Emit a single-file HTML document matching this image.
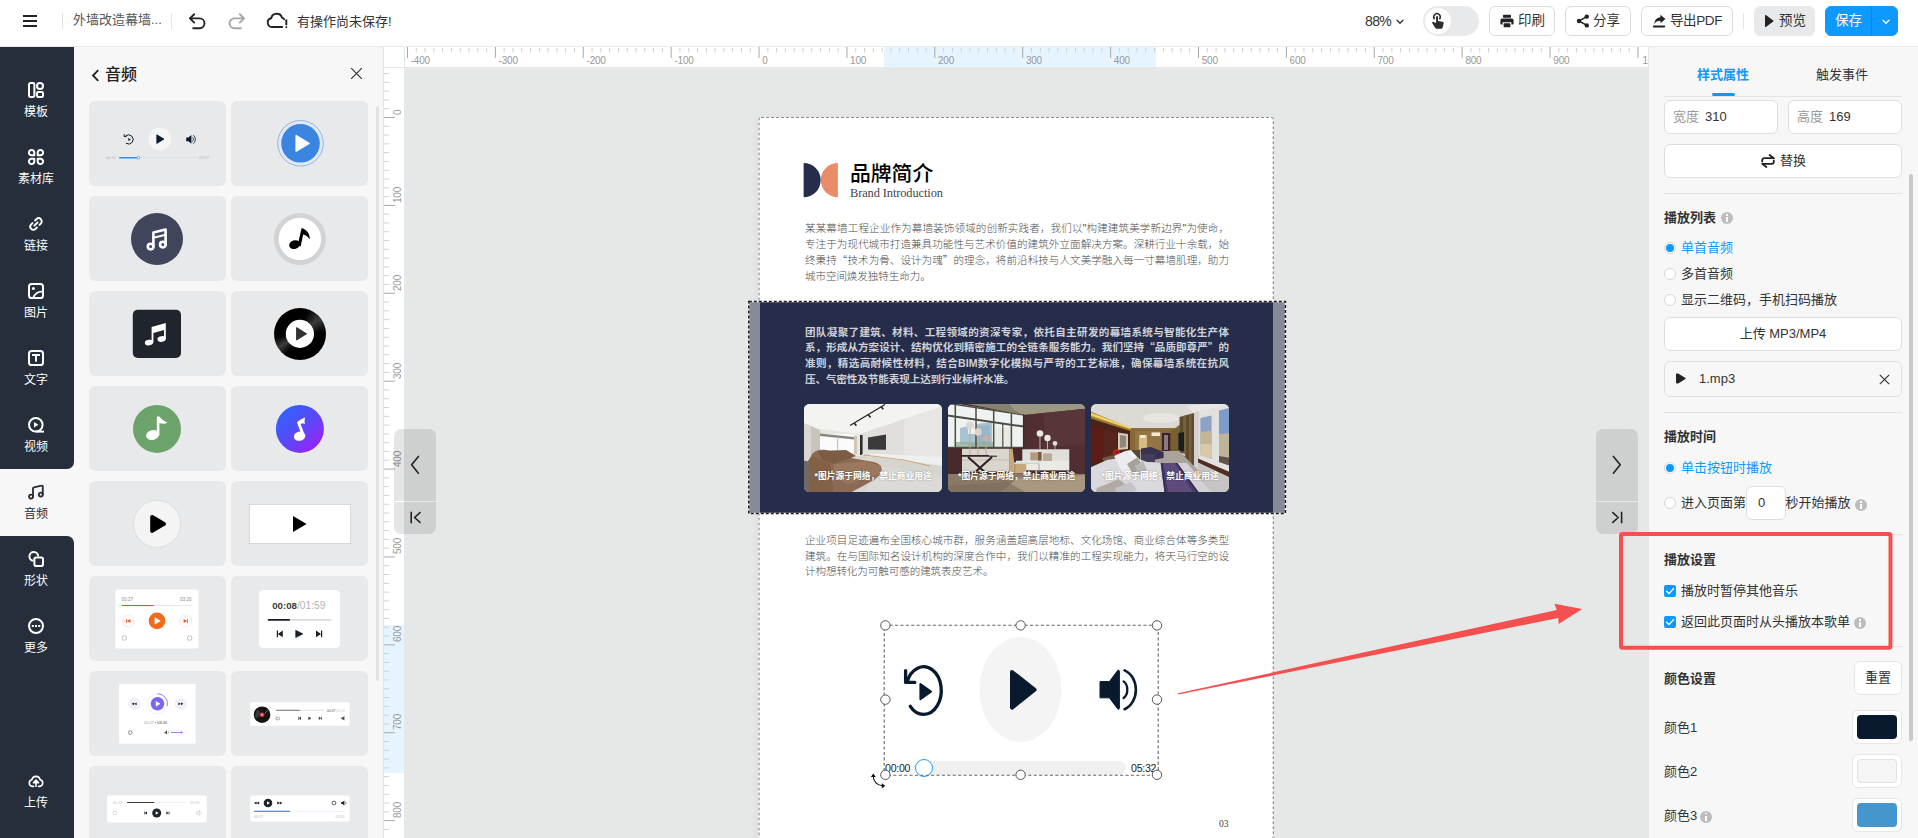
<!DOCTYPE html>
<html lang="zh-CN">
<head>
<meta charset="utf-8">
<title>编辑器</title>
<style>
*{box-sizing:border-box;margin:0;padding:0}
html,body{width:1918px;height:838px;overflow:hidden;background:#e6e8e8}
body{position:relative;font-family:"Liberation Sans","Noto Sans CJK SC",sans-serif;font-size:13px;color:#333;-webkit-font-smoothing:antialiased}
.abs{position:absolute}
svg{display:block;overflow:visible}
/* ---------- top bar ---------- */
#top{position:absolute;left:0;top:0;width:1918px;height:47px;background:#fff;border-bottom:1px solid #e9e9e9;z-index:20}
#top .t{position:absolute;white-space:nowrap;line-height:20px;height:20px}
.vdiv{position:absolute;width:1px;background:#e4e4e4}
.btn{position:absolute;top:6px;height:30px;border:1px solid #d9dbde;border-radius:6px;background:#fff;font-size:13.5px;color:#333;white-space:nowrap}
.btn span{position:absolute;top:4px;line-height:20px}
/* ---------- sidebar ---------- */
#side{position:absolute;left:0;top:47px;width:74px;height:791px;background:#f7f7f7;z-index:5}
#side .dk{position:absolute;left:0;width:74px;background:#252e3a}
.si{position:absolute;left:0;width:74px;height:67px;color:#fff;text-align:center;font-size:12px}
.si svg{position:absolute;left:28px;top:15px;width:16px;height:16px}
.si b{position:absolute;left:-1px;width:74px;top:36px;font-weight:400;line-height:18px}
.si.on{color:#242d39}
/* ---------- audio panel ---------- */
#pan{position:absolute;left:74px;top:47px;width:309px;height:791px;background:#f7f7f7;overflow:hidden}
.card{position:absolute;width:137px;height:85px;background:#e8e9eb;border-radius:6px;overflow:hidden}
/* ---------- rulers ---------- */
#rh{position:absolute;left:404px;top:47px;width:1244px;height:20px;background:#fff;overflow:hidden;z-index:3}
#rv{position:absolute;left:384px;top:67px;width:20px;height:771px;background:#fff;box-shadow:-1px 0 0 #e3e5e8;overflow:hidden;z-index:3}
#rc{position:absolute;left:383px;top:47px;width:22px;height:21px;background:#fff;border-left:1px solid #e3e5e8;border-right:1px solid #e3e5e8;border-bottom:1px solid #e3e5e8;z-index:4}
.rl{position:absolute;font-size:10px;line-height:10px;color:#999;white-space:nowrap;letter-spacing:-.2px}
/* ---------- right panel ---------- */
#rp{position:absolute;left:1648px;top:47px;width:270px;height:791px;background:#f7f7f7;border-left:1px solid #e6e6e6;z-index:6}
#rp .t{position:absolute;white-space:nowrap;line-height:18px;height:18px;font-size:13px;color:#333}
#rp .h{font-weight:700;color:#333}
#rp .hr{position:absolute;left:15px;width:238px;height:1px;background:#e3e3e3}
.box{position:absolute;background:#fff;border:1px solid #dcdee0;border-radius:6px}
.rad{position:absolute;width:12px;height:12px;border-radius:50%;border:1px solid #d6d6d6;background:#fff}
.rad.on:after{content:"";position:absolute;left:1px;top:1px;width:8px;height:8px;border-radius:50%;background:#0d99ff}
.chk{position:absolute;width:12px;height:12px;border-radius:2px;background:#0d99ff}
.inf{position:absolute;width:12px;height:12px;border-radius:50%;background:#bdbdbd}
.inf:before{content:"";position:absolute;left:4.9px;top:2.2px;width:2.2px;height:1.8px;background:#fff}
.inf:after{content:"";position:absolute;left:4.9px;top:5.3px;width:2.2px;height:4.9px;background:#fff}

/* ---------- page content ---------- */
.para{width:424px;font-size:10.56px;line-height:15.82px;white-space:nowrap}
.para div{height:15.82px;text-align:justify;text-align-last:justify;overflow:visible}
.para div.last{text-align-last:left;text-align:left;letter-spacing:-.08px}
.ph{top:404px;width:137.6px;height:87.8px;border-radius:5.5px;overflow:hidden;background:#ccc}
.q{font-style:normal;font-family:"Noto Sans CJK SC",sans-serif;line-height:0}
.ph b{position:absolute;left:0;right:0;top:65px;text-align:center;font-size:8.75px;line-height:14px;font-weight:700;color:#fff;white-space:nowrap;text-shadow:0 0 2px rgba(0,0,0,.35)}
</style>
</head>
<body>

<!-- ================= CANVAS (stage) ================= -->
<div id="stage" class="abs" style="left:404px;top:67px;width:1244px;height:771px;background:#e6e8e8;overflow:hidden">
<div class="abs" style="left:-404px;top:-67px;width:1918px;height:838px">
  <!-- page -->
  <div class="abs" style="left:758px;top:117px;width:516px;height:740px;background:#fff;border-radius:2px;box-shadow:-3px 0 6px rgba(0,0,0,.03)"></div>
  <svg class="abs" style="left:0;top:0" width="1918" height="838" viewBox="0 0 1918 838"><rect x="759" y="117.5" width="514.3" height="760" rx="2" fill="none" stroke="#8c8c8c" stroke-width="1.2" stroke-dasharray="3 2"/></svg>

  <!-- header logo -->
  <svg class="abs" style="left:803px;top:162px" width="36" height="36" viewBox="0 0 36 36"><path d="M.6 1 A17.1 17.1 0 0 1 .6 35.2 Z" fill="#252d4a"/><path d="M34.9 1 A17.1 17.1 0 0 0 34.9 35.2 Z" fill="#eb8c68"/></svg>
  <div class="abs pt" style="left:850px;top:159px;font-size:20.8px;line-height:30px;font-weight:500;color:#000;white-space:nowrap">品牌简介</div>
  <div class="abs" style="left:850px;top:185px;font-family:'Liberation Serif','DejaVu Serif',serif;font-size:12.4px;line-height:16px;color:#444;white-space:nowrap;letter-spacing:-.1px">Brand Introduction</div>

  <!-- paragraph 1 -->
  <div class="abs para" style="left:805px;top:221.4px;color:#4d4d4d;font-weight:300">
    <div>某某幕墙工程企业作为幕墙装饰领域的创新实践者，我们以"构建建筑美学新边界"为使命，</div>
    <div>专注于为现代城市打造兼具功能性与艺术价值的建筑外立面解决方案。深耕行业十余载，始</div>
    <div>终秉持<i class="q">“</i>技术为骨、设计为魂<i class="q">”</i>的理念，将前沿科技与人文美学融入每一寸幕墙肌理，助力</div>
    <div class="last">城市空间焕发独特生命力。</div>
  </div>

  <!-- dark band -->
  <div class="abs" style="left:749px;top:302px;width:536px;height:211px;background:#868a99"></div>
  <div class="abs" style="left:759.5px;top:302px;width:513.5px;height:211px;background:#252d4a"></div>
  <svg class="abs" style="left:0;top:0" width="1918" height="838" viewBox="0 0 1918 838"><rect x="748.8" y="301.6" width="536.6" height="211.8" fill="none" stroke="#fff" stroke-opacity=".75" stroke-width="1.5"/><rect x="748.8" y="301.6" width="536.6" height="211.8" fill="none" stroke="#1a1a1a" stroke-width="1.5" stroke-dasharray="3 2"/></svg>
  <div class="abs para" style="left:805px;top:324.6px;color:#cfd1d9;font-weight:700">
    <div>团队凝聚了建筑、材料、工程领域的资深专家，依托自主研发的幕墙系统与智能化生产体</div>
    <div>系，形成从方案设计、结构优化到精密施工的全链条服务能力。我们坚持<i class="q">“</i>品质即尊严<i class="q">”</i>的</div>
    <div>准则，精选高耐候性材料，结合BIM数字化模拟与严苛的工艺标准，确保幕墙系统在抗风</div>
    <div class="last">压、气密性及节能表现上达到行业标杆水准。</div>
  </div>

  <!-- photos -->
  <div id="ph1" class="abs ph" style="left:804.4px"><svg class="abs" style="left:0;top:0" width="137.6" height="87.8" viewBox="0 0 137.6 87.8" preserveAspectRatio="none"><defs><filter id="bl" x="-5%" y="-5%" width="110%" height="110%"><feGaussianBlur stdDeviation=".7"/></filter></defs><g filter="url(#bl)">
<rect x="-2" y="-2" width="142" height="92" fill="#e6e6e3"/>
<path d="M-2 -2 H140 V2 L56 30 L10 24 L-2 20 Z" fill="#f3f3f0"/>
<path d="M56 30 L140 2 V62 L56 48 Z" fill="#e0dfdc"/>
<path d="M100 16 L140 2 V62 L100 55 Z" fill="#e7e6e3"/>
<path d="M-2 18 L7 22 V60 H-2 Z" fill="#d8d6d2"/>
<path d="M7 22 L16 26 V52 L7 56 Z" fill="#c9c4bb"/>
<rect x="16" y="30" width="34" height="19" fill="#fbfbfb"/>
<path d="M16 29.5 L50 33 V35.4 L16 32 Z" fill="#8a8781"/>
<rect x="33" y="33" width="1.2" height="16" fill="#c6c4bf"/>
<rect x="50" y="32" width="3" height="18" fill="#cfc6b8"/>
<rect x="56" y="31" width="2.6" height="20" fill="#2e2e2e"/>
<path d="M64 33.4 L82 30.4 V45.8 L64 45.4 Z" fill="#3b3b3d"/>
<path d="M46 21.5 L81 0.5" stroke="#262626" stroke-width="1.3" fill="none"/>
<path d="M50 19 l2.4 2.6 M64 10.4 l2.6 3 M77 2.6 l2.4 2.6" stroke="#262626" stroke-width="1.6" fill="none"/>
<path d="M58 50 L140 58 V90 H40 Z" fill="#d6d4cf"/>
<path d="M66 49.6 L140 53 V62 L96 56 L66 52.4 Z" fill="#efefed"/>
<path d="M60 51 L100 56 L126 62" stroke="#c79a62" stroke-width="1" fill="none" opacity=".8"/>
<path d="M70 62 L140 72 V90 H60 Z" fill="#dcdad6"/>
<path d="M46 52 H66 L70 58 H50 Z" fill="#dcd8cd"/>
<path d="M8 50 C12 45 20 45 26 47 L44 47 L47 54 L70 58 C78 60 79 66 77 70 L70 76 L44 90 H4 L3 60 Z" fill="#8d6a52"/>
<path d="M14 47 L42 46 L52 52 L30 60 L18 56 Z" fill="#7c5b45"/>
<path d="M30 60 L62 57 L77 62 L77 70 L44 80 L30 74 Z" fill="#9a775d"/>
<path d="M3 58 L9 52 L26 60 L30 90 H3 Z" fill="#84614a"/>
<path d="M-2 56 L6 58 V90 H-2 Z" fill="#6f6a66"/>
</g></svg><b>*图片源于网络，禁止商业用途</b></div>
<div id="ph2" class="abs ph" style="left:947.9px"><svg class="abs" style="left:0;top:0" width="137.6" height="87.8" viewBox="0 0 137.6 87.8" preserveAspectRatio="none"><defs><filter id="bl" x="-5%" y="-5%" width="110%" height="110%"><feGaussianBlur stdDeviation=".7"/></filter></defs><g filter="url(#bl)">
<rect x="-2" y="-2" width="142" height="92" fill="#4f2f31"/>
<path d="M-2 -2 L76 11 V44 H-2 Z" fill="#eef3f1"/>
<path d="M12 24 L20 22 V40 H12 Z M28 20 L44 18 V42 H28 Z M20 30 H28 V42 H20 Z" fill="#a9c3d3"/><path d="M30 22 L42 21 V40 H30 Z" fill="#8fb0c9" opacity=".7"/>
<path d="M7 38 H56 V43.6 H7 Z" fill="#8fae98" opacity=".75"/>
<path d="M46 24 H64 V43 H46 Z" fill="#e7ebe6"/>
<g stroke="#4f4c41" fill="none"><path d="M-2 11.2 L76 22.6" stroke-width="2"/><path d="M-2 -1 L76 11" stroke-width="1.4"/><path d="M7.3 1 V44 M28 4 V44 M45.7 7 V44 M63.4 9.6 V44" stroke-width="1.5"/><path d="M54.8 20 V44" stroke-width="1.2"/><path d="M-2 43.4 H76" stroke-width="1.4"/></g>
<path d="M9 -2 H140 V4.6 L76 11 Z" fill="#85826e"/><path d="M60 -2 H140 V4.6 L76 11 L66 6 Z" fill="#a5a18b" opacity=".7"/>
<path d="M76 11 L140 4.6 V72 H76 Z" fill="#512f32"/><path d="M96 9 L140 4.6 V40 L96 44 Z" fill="#5c383a" opacity=".7"/>
<path d="M75.6 10 V46" stroke="#3c2a2a" stroke-width="1.4"/>
<path d="M-2 44 H76 V72 H-2 Z" fill="#4a2b2c"/>
<path d="M-2 70 H140 V90 H-2 Z" fill="#8a7965"/><path d="M70 74 L140 71 V90 H50 Z" fill="#b3a28a" opacity=".75"/><path d="M-2 82 L60 78 L80 90 H-2 Z" fill="#7a6b5a" opacity=".6"/>
<path d="M74.3 45.3 H121.3 V57 H74.3 Z" fill="#dfe0db"/><path d="M68 56.7 H121.3 V66.4 H68 Z" fill="#e9e9e5"/><path d="M70 66.4 H120 V68.4 H70 Z" fill="#3a2a2a" opacity=".6"/>
<path d="M82.3 48.4 h10 v8 h-10 z" fill="#b39a7f"/><path d="M90 48 h3.6 v8.6 h-3.6 z" fill="#7d5a40"/><path d="M95 49.4 h9 v7.6 h-9 z" fill="#b9ab95"/>
<path d="M14 44.7 H61.7 V67.6 H14 Z" fill="#d9d7cd"/><path d="M14 55 H61.7 V57 H14 Z" fill="#c6c3b8" opacity=".7"/>
<path d="M61.7 44.7 H64.6 L66.4 60 H78.3 V69.4 H61.7 Z" fill="#c8a77c"/>
<path d="M66 58.4 H92 V60 H66 Z" fill="#cfd6d6"/><path d="M91 60 V68 M67 60 V72" stroke="#8a8a86" stroke-width=".7"/>
<path d="M12.4 51 H49 V52.8 H12.4 Z" fill="#36212a"/><path d="M41 49.6 h9 v2 h-9 z" fill="#e3e0d6"/><path d="M20 53 L40 71 M44 53 L24 71" stroke="#2c1d24" stroke-width="2"/>
<g stroke-width="1" fill="none"><path d="M22 25 V51 M30 31 V51 M38 37 V51" stroke="#b9a99a"/><path d="M92 33 V45 M99.5 37 V45 M107 41.6 V45" stroke="#bcb6a8"/></g>
<circle cx="22" cy="21.5" r="4" fill="#ddd6d2"/><circle cx="30" cy="28" r="3.7" fill="#e2d2cb"/><circle cx="38" cy="34.4" r="2.8" fill="#d9ab9b"/>
<circle cx="92" cy="29.5" r="3.3" fill="#e9e9e1"/><circle cx="99.5" cy="34" r="3.2" fill="#e9e9e1"/><circle cx="107" cy="39.4" r="2.3" fill="#e4e2d8"/>
</g></svg><b>*图片源于网络，禁止商业用途</b></div>
<div id="ph3" class="abs ph" style="left:1091.4px"><svg class="abs" style="left:0;top:0" width="137.6" height="87.8" viewBox="0 0 137.6 87.8" preserveAspectRatio="none"><defs><filter id="bl" x="-5%" y="-5%" width="110%" height="110%"><feGaussianBlur stdDeviation=".7"/></filter></defs><g filter="url(#bl)">
<rect x="-2" y="-2" width="142" height="92" fill="#8a7040"/>
<path d="M-2 -2 H140 V4 L104 10 L84 24 H40 L-2 7 Z" fill="#dcdad5"/>
<ellipse cx="70" cy="14" rx="18" ry="5" fill="#e6e5e2"/>
<path d="M96 2 L140 -2 V6 L104 11 Z" fill="#e9e8e6"/>
<path d="M-2 8 L40 23.4 V25.6 L-2 12 Z" fill="#f2d465"/><path d="M-2 11 L40 25.4 V27.4 L-2 15.4 Z" fill="#9c7a2c" opacity=".8"/>
<path d="M-2 14 L39 27 V56 L-2 64 Z" fill="#4b2118"/>
<path d="M-2 22 L13 25 V56 L-2 60 Z" fill="#5e1c17"/><path d="M13 25 L26 28 V52 L13 56 Z" fill="#56251a"/>
<path d="M27 28.4 L37 30 V45 L27 46 Z" fill="#cfc8ba"/><path d="M29 31 L35 32 V43 L29 44 Z" fill="#8f8878"/>
<path d="M39 25.6 H84 V48 H39 Z" fill="#86693a"/><path d="M44 27 H70 V47 H44 Z" fill="#9a7c48" opacity=".7"/>
<rect x="60.5" y="28.4" width="8.6" height="3.6" fill="#f3ead6"/><path d="M48 31 H56 V46 H48 Z" fill="#e0c78e" opacity=".85"/><rect x="49.4" y="31" width="5" height="3" fill="#f6ecd2"/>
<path d="M71 29 H79.4 V47 H71 Z" fill="#3b2227"/><path d="M73 31 H77 V46 H73 Z" fill="#8a7a86"/>
<path d="M80 26 L88 24 V50 L80 47 Z" fill="#74602f"/>
<path d="M88.6 13 L103 9 V68 L88.6 60 Z" fill="#5c4b2d"/><path d="M92 12 L95 11.2 V63 L92 61.6 Z M98 10.4 L100.4 9.8 V66 L98 64.8 Z" fill="#7b683e" opacity=".8"/>
<path d="M87.4 29 L93 28 V47.5 L87.4 46 Z" fill="#1f1c20"/><path d="M84 47 L94 50 V52 L84 49 Z" fill="#d8d2cc"/>
<path d="M103 8 L108 7 V70 L103 67 Z" fill="#d5d3d1"/>
<path d="M108 7 L140 0 V72 L108 58 Z" fill="#e3e1df"/>
<path d="M109.4 14 L120.6 11.4 V55 L109.4 51 Z" fill="#8ea2c5"/><path d="M109.4 28 L120.6 26.6 V55 L109.4 51 Z" fill="#cdb98d" opacity=".85"/><path d="M109.4 40 L120.6 40 V55 L109.4 51 Z" fill="#e2d2b0" opacity=".7"/>
<path d="M128 6.6 L140 3.6 V62 L128 58 Z" fill="#7e9bcc"/><path d="M128 30 L140 29 V62 L128 58 Z" fill="#c9b88f" opacity=".85"/><path d="M128 52 L140 54 V62 L128 58 Z" fill="#4a3a34" opacity=".8"/>
<path d="M107 54.4 L140 68.6 V74 L107 58.4 Z" fill="#4f2d25"/>
<path d="M107 58.4 L140 74 V90 H118 L107 72 Z" fill="#c7c5c3"/>
<path d="M40 47 H88 L107 66 L118 90 H60 L50 60 Z" fill="#aaa39b"/>
<path d="M50 44.6 L60 43 L72.6 48 V54 L64 55.4 V58 H50 Z" fill="#37314d"/><path d="M50 50 H64 V58 H50 Z" fill="#443c5c"/>
<path d="M40 46 H49 V55 H40 Z" fill="#5a4634"/>
<circle cx="25.4" cy="48.6" r="3.4" fill="#be2220"/><circle cx="25.8" cy="48.4" r="1.4" fill="#7d1a18"/>
<path d="M11 54 L22 51 L26 56 L14 60 Z" fill="#6e5a48"/>
<path d="M-2 64 L16 56 L40 52 L56 58 L70 59 L76 90 H-2 Z" fill="#d9d9de"/>
<path d="M86 59 L96 59 L122 90 H106 Z" fill="#d2d1d5"/>
<path d="M23 52 L34 47 L44 55 L47 64 L32 70 Z" fill="#ecebee"/><path d="M34 47 L40 46 L48 55 L44 56 Z" fill="#f4f3f5"/>
<path d="M36 60 L46 53.6 L52 62 L42 70 Z" fill="#a7a197"/><path d="M44 62 L52 57 L56 66 L48 72 Z" fill="#b9b6b6"/>
<path d="M6 84 L28 75 L36 82 L20 90 H4 Z" fill="#b0aba4"/><path d="M24 84 L40 78 L46 86 L38 90 H26 Z" fill="#c4c2c6"/>
<path d="M69.7 59 H86.3 L109 90 H73.7 Z" fill="#4a3b69"/><path d="M72.6 59 H83.4 L103 90 H77.4 Z" fill="#6a5788" opacity=".6"/><path d="M69.7 59 H71 L75.4 90 H73.7 Z M85 59 H86.3 L109 90 H107 Z" fill="#2e2548" opacity=".8"/>
</g></svg><b>*图片源于网络，禁止商业用途</b></div>

  <!-- paragraph 3 -->
  <div class="abs para" style="left:805px;top:532.8px;color:#4d4d4d;font-weight:300">
    <div>企业项目足迹遍布全国核心城市群，服务涵盖超高层地标、文化场馆、商业综合体等多类型</div>
    <div>建筑。在与国际知名设计机构的深度合作中，我们以精准的工程实现能力，将天马行空的设</div>
    <div class="last">计构想转化为可触可感的建筑表皮艺术。</div>
  </div>
  <div class="abs" style="left:1219px;top:817px;font-family:'Liberation Serif',serif;font-size:9.6px;line-height:14px;color:#444">03</div>

  <!-- player -->
  <div id="player">
  <!-- progress track / labels -->
  <div class="abs" style="left:922px;top:761px;width:204px;height:14px;border-radius:0 7px 7px 0;background:#f0f0f0"></div>
  <div class="abs" style="left:915px;top:759px;width:18px;height:18px;border-radius:50%;background:#fff;border:1px solid #1e9fff"></div>
  <div class="abs" style="left:885px;top:761px;font-size:10.6px;line-height:14px;color:#222;letter-spacing:-.25px;white-space:nowrap">00:00</div>
  <div class="abs" style="left:1131px;top:761px;font-size:10.6px;line-height:14px;color:#222;letter-spacing:-.25px;white-space:nowrap">05:32</div>
  <svg class="abs" style="left:0;top:0" width="1918" height="838" viewBox="0 0 1918 838">
    <ellipse cx="1020.4" cy="689.5" rx="41" ry="52.5" fill="#f4f4f4"/>
    <path d="M1012 672 L1034.6 689.8 L1012 707.6 Z" fill="#0a1a2e" stroke="#0a1a2e" stroke-width="4" stroke-linejoin="round"/>
    <!-- replay -->
    <g fill="none" stroke="#0a1a2e" stroke-width="3.3" stroke-linecap="round" stroke-linejoin="round">
      <path d="M907 682.2 A17.7 23.8 0 1 1 910.3 706.3"/>
      <path d="M905.6 670.6 V682.4 H914.8"/>
    </g>
    <path d="M920.4 684 L931 691.6 L920.4 699.2 Z" fill="#0a1a2e" stroke="#0a1a2e" stroke-width="2" stroke-linejoin="round"/>
    <!-- volume -->
    <path d="M1100 681.6 H1109.4 L1117.6 670.6 A1 1 0 0 1 1119.4 671.2 V708.2 A1 1 0 0 1 1117.6 708.8 L1109.4 697.8 H1100 Z" fill="#0a1a2e" stroke="#0a1a2e" stroke-width="1" stroke-linejoin="round"/>
    <g fill="none" stroke="#0a1a2e" stroke-linecap="round"><path d="M1123.6 681.4 A7 9.4 0 0 1 1123.6 698" stroke-width="2.3"/><path d="M1124.6 670.4 A17 20.6 0 0 1 1124.6 709.2" stroke-width="2.6"/></g>
    <!-- selection -->
    <rect x="884.2" y="625.2" width="274" height="150" fill="none" stroke="#666" stroke-width="1.1" stroke-dasharray="3.1 2.3"/>
    <g fill="#fff" stroke="#555" stroke-width="1"><circle cx="885.4" cy="625.4" r="4.7"/><circle cx="1020.6" cy="625.4" r="4.7"/><circle cx="1157" cy="625.4" r="4.7"/><circle cx="885.4" cy="699.6" r="4.7"/><circle cx="1157" cy="699.6" r="4.7"/><circle cx="885.4" cy="774.8" r="4.7"/><circle cx="1020.6" cy="774.8" r="4.7"/><circle cx="1157" cy="774.8" r="4.7"/></g>
    <!-- rotate -->
    <path d="M873.3 776.4 A9.6 9.6 0 0 0 882.4 785.8" fill="none" stroke="#111" stroke-width="1.1"/><path d="M873.3 773.6 L875.8 777 H870.8 Z M885.2 785.8 L881.8 783.2 V788.4 Z" fill="#111"/>
  </svg>
</div>

</div>
</div>

<!-- ================= RULERS ================= -->
<div id="rh">
<div class="abs" style="left:479.5px;top:0;width:272.5px;height:20px;background:#e6f4ff"></div>
<svg class="abs" style="left:0;top:0" width="1244" height="20" viewBox="0 0 1244 20">
<path d="M12.28 1V5.5M21.07 1V5.5M29.86 1V5.5M38.65 1V5.5M47.43 1V5.5M56.22 1V5.5M65.01 1V5.5M73.80 1V5.5M82.59 1V5.5M100.17 1V5.5M108.96 1V5.5M117.75 1V5.5M126.54 1V5.5M135.32 1V5.5M144.11 1V5.5M152.90 1V5.5M161.69 1V5.5M170.48 1V5.5M188.06 1V5.5M196.85 1V5.5M205.64 1V5.5M214.43 1V5.5M223.21 1V5.5M232.00 1V5.5M240.79 1V5.5M249.58 1V5.5M258.37 1V5.5M275.95 1V5.5M284.74 1V5.5M293.53 1V5.5M302.32 1V5.5M311.10 1V5.5M319.89 1V5.5M328.68 1V5.5M337.47 1V5.5M346.26 1V5.5M363.84 1V5.5M372.63 1V5.5M381.42 1V5.5M390.21 1V5.5M398.99 1V5.5M407.78 1V5.5M416.57 1V5.5M425.36 1V5.5M434.15 1V5.5M451.73 1V5.5M460.52 1V5.5M469.31 1V5.5M478.10 1V5.5M486.88 1V5.5M495.67 1V5.5M504.46 1V5.5M513.25 1V5.5M522.04 1V5.5M539.62 1V5.5M548.41 1V5.5M557.20 1V5.5M565.99 1V5.5M574.77 1V5.5M583.56 1V5.5M592.35 1V5.5M601.14 1V5.5M609.93 1V5.5M627.51 1V5.5M636.30 1V5.5M645.09 1V5.5M653.88 1V5.5M662.66 1V5.5M671.45 1V5.5M680.24 1V5.5M689.03 1V5.5M697.82 1V5.5M715.40 1V5.5M724.19 1V5.5M732.98 1V5.5M741.77 1V5.5M750.55 1V5.5M759.34 1V5.5M768.13 1V5.5M776.92 1V5.5M785.71 1V5.5M803.29 1V5.5M812.08 1V5.5M820.87 1V5.5M829.66 1V5.5M838.44 1V5.5M847.23 1V5.5M856.02 1V5.5M864.81 1V5.5M873.60 1V5.5M891.18 1V5.5M899.97 1V5.5M908.76 1V5.5M917.55 1V5.5M926.33 1V5.5M935.12 1V5.5M943.91 1V5.5M952.70 1V5.5M961.49 1V5.5M979.07 1V5.5M987.86 1V5.5M996.65 1V5.5M1005.44 1V5.5M1014.22 1V5.5M1023.01 1V5.5M1031.80 1V5.5M1040.59 1V5.5M1049.38 1V5.5M1066.96 1V5.5M1075.75 1V5.5M1084.54 1V5.5M1093.33 1V5.5M1102.12 1V5.5M1110.90 1V5.5M1119.69 1V5.5M1128.48 1V5.5M1137.27 1V5.5M1154.85 1V5.5M1163.64 1V5.5M1172.43 1V5.5M1181.22 1V5.5M1190.01 1V5.5M1198.79 1V5.5M1207.58 1V5.5M1216.37 1V5.5M1225.16 1V5.5" stroke="#cbd3da" stroke-width="1" fill="none"/>
<path d="M3.49 0V11M91.38 0V11M179.27 0V11M267.16 0V11M355.05 0V11M442.94 0V11M530.83 0V11M618.72 0V11M706.61 0V11M794.50 0V11M882.39 0V11M970.28 0V11M1058.17 0V11M1146.06 0V11M1233.95 0V11" stroke="#a9a9a9" stroke-width="1" fill="none"/>
</svg>
<span class="rl" style="left:6.7px;top:9px">-400</span>
<span class="rl" style="left:94.6px;top:9px">-300</span>
<span class="rl" style="left:182.5px;top:9px">-200</span>
<span class="rl" style="left:270.4px;top:9px">-100</span>
<span class="rl" style="left:358.2px;top:9px">0</span>
<span class="rl" style="left:446.1px;top:9px">100</span>
<span class="rl" style="left:534.0px;top:9px">200</span>
<span class="rl" style="left:621.9px;top:9px">300</span>
<span class="rl" style="left:709.8px;top:9px">400</span>
<span class="rl" style="left:797.7px;top:9px">500</span>
<span class="rl" style="left:885.6px;top:9px">600</span>
<span class="rl" style="left:973.5px;top:9px">700</span>
<span class="rl" style="left:1061.4px;top:9px">800</span>
<span class="rl" style="left:1149.3px;top:9px">900</span>
<span class="rl" style="left:1238.4px;top:9px">1000</span>
</div>
<div id="rv">
<div class="abs" style="left:0;top:557.6px;width:20px;height:148.5px;background:#e6f4ff"></div>
<svg class="abs" style="left:0;top:0" width="20" height="771" viewBox="0 0 20 771">
<path d="M0 6.55H5M0 15.34H5M0 24.13H5M0 32.92H5M0 41.71H5M0 59.29H5M0 68.08H5M0 76.87H5M0 85.66H5M0 94.44H5M0 103.23H5M0 112.02H5M0 120.81H5M0 129.60H5M0 147.18H5M0 155.97H5M0 164.76H5M0 173.55H5M0 182.34H5M0 191.12H5M0 199.91H5M0 208.70H5M0 217.49H5M0 235.07H5M0 243.86H5M0 252.65H5M0 261.44H5M0 270.23H5M0 279.01H5M0 287.80H5M0 296.59H5M0 305.38H5M0 322.96H5M0 331.75H5M0 340.54H5M0 349.33H5M0 358.12H5M0 366.90H5M0 375.69H5M0 384.48H5M0 393.27H5M0 410.85H5M0 419.64H5M0 428.43H5M0 437.22H5M0 446.00H5M0 454.79H5M0 463.58H5M0 472.37H5M0 481.16H5M0 498.74H5M0 507.53H5M0 516.32H5M0 525.11H5M0 533.89H5M0 542.68H5M0 551.47H5M0 560.26H5M0 569.05H5M0 586.63H5M0 595.42H5M0 604.21H5M0 613.00H5M0 621.78H5M0 630.57H5M0 639.36H5M0 648.15H5M0 656.94H5M0 674.52H5M0 683.31H5M0 692.10H5M0 700.89H5M0 709.67H5M0 718.46H5M0 727.25H5M0 736.04H5M0 744.83H5M0 762.41H5" stroke="#cbd3da" stroke-width="1" fill="none"/>
<path d="M0 50.50H11M0 138.39H11M0 226.28H11M0 314.17H11M0 402.06H11M0 489.95H11M0 577.84H11M0 665.73H11M0 753.62H11" stroke="#a9a9a9" stroke-width="1" fill="none"/>
</svg>
<span class="rl" style="left:9px;top:47.9px;transform-origin:0 0;transform:rotate(-90deg)">0</span>
<span class="rl" style="left:9px;top:135.8px;transform-origin:0 0;transform:rotate(-90deg)">100</span>
<span class="rl" style="left:9px;top:223.7px;transform-origin:0 0;transform:rotate(-90deg)">200</span>
<span class="rl" style="left:9px;top:311.6px;transform-origin:0 0;transform:rotate(-90deg)">300</span>
<span class="rl" style="left:9px;top:399.5px;transform-origin:0 0;transform:rotate(-90deg)">400</span>
<span class="rl" style="left:9px;top:487.3px;transform-origin:0 0;transform:rotate(-90deg)">500</span>
<span class="rl" style="left:9px;top:575.2px;transform-origin:0 0;transform:rotate(-90deg)">600</span>
<span class="rl" style="left:9px;top:663.1px;transform-origin:0 0;transform:rotate(-90deg)">700</span>
<span class="rl" style="left:9px;top:751.0px;transform-origin:0 0;transform:rotate(-90deg)">800</span>
</div>
<div id="rc"></div>

<div id="nav" class="abs" style="left:0;top:0;width:0;height:0;z-index:4">
  <div class="abs" style="left:394px;top:428.5px;width:42px;height:72px;border-radius:7px 7px 0 0;background:rgba(0,0,0,.1)"></div>
  <div class="abs" style="left:394px;top:501.5px;width:42px;height:32px;border-radius:0 0 7px 7px;background:rgba(0,0,0,.1)"></div>
  <div class="abs" style="left:1596px;top:428.5px;width:42px;height:72px;border-radius:7px 7px 0 0;background:rgba(0,0,0,.1)"></div>
  <div class="abs" style="left:1596px;top:501.5px;width:42px;height:32px;border-radius:0 0 7px 7px;background:rgba(0,0,0,.1)"></div>
  <svg class="abs" style="left:0;top:0" width="1918" height="838" viewBox="0 0 1918 838"><g fill="none" stroke="#222" stroke-width="1.6" stroke-linecap="round" stroke-linejoin="round"><path d="M418.4 456.4 L411.6 464.8 L418.4 473.2"/><path d="M411.2 512.2 V522.8 M420 512.6 L414.6 517.5 L420 522.4"/><path d="M1613.4 456.4 L1620.2 464.8 L1613.4 473.2"/><path d="M1621.6 512.2 V522.8 M1612.8 512.6 L1618.2 517.5 L1612.8 522.4"/></g></svg>
</div>

<!-- ================= TOP BAR ================= -->
<div id="top">
  <!-- hamburger -->
  <div class="abs" style="left:23px;top:15px;width:14px;height:2px;background:#222;box-shadow:0 5px 0 #222,0 10px 0 #222"></div>
  <div class="vdiv" style="left:62px;top:13px;height:16px"></div>
  <div class="t" style="left:73px;top:10px;font-size:13px;color:#555">外墙改造幕墙...</div>
  <div class="vdiv" style="left:171px;top:13px;height:16px"></div>
  <!-- undo -->
  <svg class="abs" style="left:188px;top:12px" width="18" height="18" viewBox="0 0 18 18"><path d="M6.2 2.2 L1.9 6.4 L6.2 10.6 M2.3 6.4 H11.6 A4.9 4.9 0 0 1 11.6 16.2 H5.2" fill="none" stroke="#222" stroke-width="1.9" stroke-linecap="round" stroke-linejoin="round"/></svg>
  <!-- redo -->
  <svg class="abs" style="left:228px;top:12px" width="18" height="18" viewBox="0 0 18 18"><path d="M11.8 2.2 L16.1 6.4 L11.8 10.6 M15.7 6.4 H6.4 A4.9 4.9 0 0 0 6.4 16.2 H12.8" fill="none" stroke="#a6a6a6" stroke-width="1.9" stroke-linecap="round" stroke-linejoin="round"/></svg>
  <!-- cloud -->
  <svg class="abs" style="left:266px;top:12px" width="24" height="18" viewBox="0 0 24 18"><path d="M16.2 15 H6 A4.4 4.4 0 0 1 5.2 6.3 A5.6 5.6 0 0 1 16 5.6 A4.2 4.2 0 0 1 18.2 7.2" fill="none" stroke="#222" stroke-width="1.9" stroke-linecap="round" stroke-linejoin="round"/><path d="M20.3 8.2 V12.6" stroke="#222" stroke-width="1.9" stroke-linecap="round"/><circle cx="20.3" cy="15.3" r="1" fill="#222"/></svg>
  <div class="t" style="left:297px;top:12px;font-size:13px;color:#333">有操作尚未保存!</div>

  <div class="t" style="left:1365px;top:11px;font-size:14px;color:#333;letter-spacing:-.6px">88%</div>
  <svg class="abs" style="left:1396px;top:19px" width="8" height="6" viewBox="0 0 8 6"><path d="M1 1.2 L4 4.2 L7 1.2" fill="none" stroke="#333" stroke-width="1.3" stroke-linecap="round" stroke-linejoin="round"/></svg>
  <!-- toggle -->
  <div class="abs" style="left:1423px;top:6px;width:56px;height:30px;border-radius:15px;background:#e8e9eb"></div>
  <div class="abs" style="left:1425px;top:8px;width:26px;height:26px;border-radius:13px;background:#fff"></div>
  <svg class="abs" style="left:1431px;top:12px" width="14" height="18" viewBox="0 0 14 18"><path d="M5.1 10.6 V4.9 A0.95 0.95 0 0 1 7 4.9 V8.9 L11.4 9.7 A1.6 1.6 0 0 1 12.7 11.6 L11.6 15.6 A1.6 1.6 0 0 1 10 16.8 H5.8 A1.8 1.8 0 0 1 4.3 16 L1.2 10.9 A.9 .9 0 0 1 2.5 9.8 L4.2 11 Z" fill="#2e2e2e"/><path d="M3.5 7.2 A3.2 3.4 0 1 1 8.5 7.2" fill="none" stroke="#2e2e2e" stroke-width="1.5"/></svg>
  <!-- print -->
  <div class="btn" style="left:1489px;width:66px">
    <svg class="abs" style="left:10px;top:7px" width="14" height="14" viewBox="0 0 14 14"><rect x="3" y="0.8" width="8" height="3" rx=".8" fill="#222"/><path d="M2.2 4.6 H11.8 A1.8 1.8 0 0 1 13.6 6.4 V9.6 A1 1 0 0 1 12.6 10.6 H11.4 V8.2 H2.6 V10.6 H1.4 A1 1 0 0 1 .4 9.6 V6.4 A1.8 1.8 0 0 1 2.2 4.6 Z" fill="#222"/><rect x="3.6" y="9.2" width="6.8" height="4" rx=".8" fill="#222"/></svg>
    <span style="left:28px">印刷</span>
  </div>
  <!-- share -->
  <div class="btn" style="left:1565px;width:66px">
    <svg class="abs" style="left:10px;top:7px" width="14" height="14" viewBox="0 0 14 14"><path d="M10.8 2.6 L3 7 L10.8 11.4" fill="none" stroke="#222" stroke-width="1.5"/><circle cx="10.8" cy="2.6" r="2.2" fill="#222"/><circle cx="3" cy="7" r="2.2" fill="#222"/><circle cx="10.8" cy="11.4" r="2.2" fill="#222"/></svg>
    <span style="left:27px">分享</span>
  </div>
  <!-- export -->
  <div class="btn" style="left:1641px;width:92px">
    <svg class="abs" style="left:10px;top:7px" width="14" height="14" viewBox="0 0 14 14"><path d="M8.4 .8 L13.4 5 L8.4 9.2 V6.8 C5.6 6.8 3.6 7.8 2.2 10 C2.6 6.2 4.8 3.6 8.4 3.2 Z" fill="#222"/><rect x=".8" y="11.6" width="12.4" height="1.8" rx=".9" fill="#222"/></svg>
    <span style="left:28px;letter-spacing:-.4px">导出PDF</span>
  </div>
  <div class="vdiv" style="left:1743px;top:13px;height:16px"></div>
  <!-- preview -->
  <div class="btn" style="left:1754px;width:61px;border-color:#e8e9eb;background:#e8e9eb">
    <svg class="abs" style="left:9px;top:7px" width="10" height="14" viewBox="0 0 10 14"><path d="M1 1.6 A.6 .6 0 0 1 1.9 1.1 L9.2 6.5 A.6 .6 0 0 1 9.2 7.5 L1.9 12.9 A.6 .6 0 0 1 1 12.4 Z" fill="#222"/></svg>
    <span style="left:24px">预览</span>
  </div>
  <!-- save -->
  <div class="btn" style="left:1825px;width:73px;border-color:#0d99ff;background:#0d99ff;color:#fff">
    <span style="left:9px">保存</span>
    <div class="abs" style="left:45px;top:-1px;width:1px;height:30px;background:#0b88e6"></div>
    <svg class="abs" style="left:56px;top:12px" width="8" height="6" viewBox="0 0 8 6"><path d="M1 1.2 L4 4.2 L7 1.2" fill="none" stroke="#fff" stroke-width="1.3" stroke-linecap="round" stroke-linejoin="round"/></svg>
  </div>
</div>

<!-- ================= SIDEBAR ================= -->
<div id="side">
  <div class="dk" style="top:0;height:422px;border-bottom-right-radius:7px"></div>
  <div class="dk" style="top:489px;height:302px;border-top-right-radius:7px"></div>
  <div class="si" style="top:20px"><svg viewBox="0 0 16 16"><g fill="none" stroke="#fff" stroke-width="2"><rect x="1" y="1" width="5.4" height="14" rx="1.4"/><circle cx="12" cy="4" r="3"/><rect x="9" y="10" width="6" height="5" rx="1.2"/></g></svg><b>模板</b></div>
  <div class="si" style="top:87px"><svg viewBox="0 0 16 16"><g fill="none" stroke="#fff" stroke-width="2" stroke-linejoin="round"><path d="M6.3 6.3 H3.7 A2.7 2.7 0 1 1 6.3 3.7 Z"/><path d="M9.7 6.3 H12.3 A2.7 2.7 0 1 0 9.7 3.7 Z"/><path d="M6.3 9.7 H3.7 A2.7 2.7 0 1 0 6.3 12.3 Z"/><path d="M9.7 9.7 H12.3 A2.7 2.7 0 1 1 9.7 12.3 Z"/></g></svg><b>素材库</b></div>
  <div class="si" style="top:154px"><svg viewBox="0 0 16 16"><g fill="none" stroke="#fff" stroke-width="1.9" stroke-linecap="round" transform="rotate(-45 8 8)"><path d="M6.2 4.9 H4.3 A3.1 3.1 0 0 0 4.3 11.1 H6.2"/><path d="M9.8 4.9 H11.7 A3.1 3.1 0 0 1 11.7 11.1 H9.8"/><path d="M5.6 8 H10.4"/></g></svg><b>链接</b></div>
  <div class="si" style="top:221px"><svg viewBox="0 0 16 16"><g fill="none" stroke="#fff" stroke-width="2"><rect x="1" y="1" width="14" height="14" rx="2.6"/><path d="M5 15 C7.2 10 9.6 8.2 14.6 8.6" stroke-width="1.8"/></g><circle cx="5.4" cy="5.4" r="1.5" fill="#fff"/></svg><b>图片</b></div>
  <div class="si" style="top:288px"><svg viewBox="0 0 16 16"><g fill="none" stroke="#fff" stroke-width="2"><rect x="1" y="1" width="14" height="14" rx="2.6"/><path d="M4 5 H12 M8 5 V11.8" stroke-width="1.9"/></g></svg><b>文字</b></div>
  <div class="si" style="top:355px"><svg viewBox="0 0 16 16"><g fill="none" stroke="#fff" stroke-width="2"><circle cx="7.8" cy="7.8" r="6.8"/><path d="M7.8 14.6 H16"/></g><path d="M6 5 L10.4 7.8 L6 10.6 Z" fill="#fff"/></svg><b>视频</b></div>
  <div class="si on" style="top:422px"><svg viewBox="0 0 16 16"><g fill="none" stroke="#242d39" stroke-width="1.8" stroke-linejoin="round" stroke-linecap="round"><path d="M5 12.6 V4.4 A1.2 1.2 0 0 1 5.9 3.3 L13.4 1.6 A1.1 1.1 0 0 1 14.8 2.7 V10.6"/><circle cx="3" cy="12.6" r="2"/><circle cx="12.8" cy="10.6" r="2"/></g></svg><b>音频</b></div>
  <div class="si" style="top:489px"><svg viewBox="0 0 16 16"><g fill="none" stroke="#fff" stroke-width="2"><path d="M5.4 9.8 A4.4 4.4 0 1 1 10.2 5.3"/><rect x="6.4" y="6.4" width="8.6" height="8.6" rx="1.8"/></g></svg><b>形状</b></div>
  <div class="si" style="top:556px"><svg viewBox="0 0 16 16"><circle cx="8" cy="8" r="7" fill="none" stroke="#fff" stroke-width="2"/><g fill="#fff"><rect x="3.8" y="7" width="2" height="2"/><rect x="7" y="7" width="2" height="2"/><rect x="10.2" y="7" width="2" height="2"/></g></svg><b>更多</b></div>
  <div class="si" style="top:711px"><svg viewBox="0 0 16 16"><path d="M5.6 13.4 H4.4 A3.4 3.4 0 0 1 3.9 6.7 A4.2 4.2 0 0 1 12.1 6.7 A3.4 3.4 0 0 1 11.6 13.4 H10.6" fill="none" stroke="#fff" stroke-width="1.6" stroke-linecap="round"/><path d="M8 14 V8.6 M5.4 9.8 L8 7 L10.6 9.8 Z" fill="#fff" stroke="#fff" stroke-width="1.5" stroke-linejoin="round"/></svg><b>上传</b></div>
</div>

<!-- ================= AUDIO PANEL ================= -->
<div id="pan">
  <svg class="abs" style="left:16.8px;top:22px" width="9" height="13" viewBox="0 0 9 13"><path d="M7.2 1.2 L2 6.5 L7.2 11.8" fill="none" stroke="#222" stroke-width="1.8"/></svg>
  <div class="abs" style="left:31px;top:17px;font-size:16px;line-height:22px;color:#222;font-weight:500;white-space:nowrap">音频</div>
  <svg class="abs" style="left:276px;top:20.3px" width="13" height="13" viewBox="0 0 13 13"><path d="M1.2 1.2 L11.8 11.8 M11.8 1.2 L1.2 11.8" fill="none" stroke="#333" stroke-width="1.2"/></svg>
  <div class="abs" style="left:302px;top:59px;width:3.4px;height:575px;border-radius:2px;background:#e1e2e4"></div>

  <!-- row 1 -->
  <div class="card" style="left:15px;top:54px"><svg width="137" height="85" viewBox="0 0 137 85">
    <circle cx="70.9" cy="38.1" r="11.3" fill="#f5f5f5"/>
    <path d="M67.8 33.8 L75 38.1 L67.8 42.4 Z" fill="#0a1a2e" stroke="#0a1a2e" stroke-width=".8" stroke-linejoin="round"/>
    <g fill="none" stroke="#0a1a2e" stroke-width="1" stroke-linecap="round"><path d="M36.6 34.9 A4.6 4.6 0 1 1 37.2 42.4"/><path d="M35.2 33.6 V35.6 H37.2"/></g><path d="M39.3 36.9 L41.9 38.4 L39.3 39.9 Z" fill="#0a1a2e"/>
    <path d="M97.2 36.6 H99.4 L102.4 34 V42.8 L99.4 40.2 H97.2 Z" fill="#0a1a2e"/><path d="M103.8 36.6 A2.4 2.4 0 0 1 103.8 40.2 M104.6 34.4 A5 5 0 0 1 104.6 42.4" fill="none" stroke="#0a1a2e" stroke-width=".8" stroke-linecap="round"/>
    <text x="17" y="58.2" font-size="4" fill="#b4b4b4">00:57</text>
    <rect x="30" y="56.2" width="79" height="1" fill="#dddee0"/><rect x="30" y="56" width="19.4" height="1.4" rx=".7" fill="#3b8bf5"/><circle cx="49.4" cy="56.7" r="1.4" fill="#fff" stroke="#3b8bf5" stroke-width=".7"/>
    <text x="110" y="58.2" font-size="4" fill="#b4b4b4">03:57</text>
  </svg></div>
  <div class="card" style="left:157px;top:54px"><svg width="137" height="85" viewBox="0 0 137 85">
    <circle cx="69.5" cy="42.3" r="22.8" fill="#e3e8f4" stroke="#3a85e0" stroke-width=".5"/><circle cx="69.5" cy="42.3" r="19.3" fill="#3a85e0"/>
    <path d="M65.2 34.8 L78 42.4 L65.2 50 Z" fill="#fff" stroke="#fff" stroke-width="1.6" stroke-linejoin="round"/>
  </svg></div>

  <!-- row 2 -->
  <div class="card" style="left:15px;top:149px"><svg width="137" height="85" viewBox="0 0 137 85">
    <circle cx="68" cy="42.9" r="26" fill="#41455c"/>
    <g fill="none" stroke="#fff" stroke-width="2.6" stroke-linejoin="round" stroke-linecap="round"><path d="M64.4 50.4 V36.6 L76.6 33.6 V48.4"/><path d="M64.4 41.8 L76.6 38.8" stroke-width="2.2"/><circle cx="61.6" cy="50.6" r="2.8"/><circle cx="73.8" cy="48.6" r="2.8"/></g>
  </svg></div>
  <div class="card" style="left:157px;top:149px"><svg width="137" height="85" viewBox="0 0 137 85">
    <circle cx="68.9" cy="42.9" r="23.6" fill="#fff" stroke="#d2d3d5" stroke-width="4.8"/>
    <ellipse cx="63.6" cy="48.6" rx="5.6" ry="4.3" transform="rotate(-18 63.6 48.600000000000001)" fill="#000"/><path d="M66.6 49.6 L70.6 32 C75 33.4 79 36.8 78.8 43.2 C76.4 40 74 38.6 72.2 38.4 L69.6 50.4 Z" fill="#000"/>
  </svg></div>

  <!-- row 3 -->
  <div class="card" style="left:15px;top:244px"><svg width="137" height="85" viewBox="0 0 137 85">
    <rect x="43.8" y="18.7" width="48.2" height="48.3" rx="5" fill="#20252d"/>
    <g fill="#fff"><ellipse cx="60" cy="51.6" rx="4.2" ry="2.8" transform="rotate(-12 60 51.600000000000001)"/><ellipse cx="72.6" cy="48" rx="4.2" ry="2.8" transform="rotate(-12 72.6 48)"/><path d="M62.6 51.4 V36 L76.8 32 V48 H75 V39 L64.4 42 V51.4 Z"/></g>
  </svg></div>
  <div class="card" style="left:157px;top:244px">
    <div class="abs" style="left:42.9px;top:16.9px;width:52px;height:52px;border-radius:50%;background:conic-gradient(from 0deg,#000 0deg,#050505 20deg,#3c3c3c 52deg,#050505 84deg,#000 110deg,#000 200deg,#050505 215deg,#3c3c3c 238deg,#050505 262deg,#000 280deg,#000 360deg)"></div>
    <svg class="abs" style="left:0;top:0" width="137" height="85" viewBox="0 0 137 85"><circle cx="68.9" cy="42.9" r="14.1" fill="#fff"/><path d="M65.6 36.6 L75.6 42.8 L65.6 49 Z" fill="#333" stroke="#333" stroke-width="1" stroke-linejoin="round"/></svg>
  </div>

  <!-- row 4 -->
  <div class="card" style="left:15px;top:339px"><svg width="137" height="85" viewBox="0 0 137 85">
    <circle cx="68" cy="42.9" r="24" fill="#6ba36a"/>
    <g fill="#fff"><ellipse cx="63.6" cy="49" rx="6.6" ry="5" transform="rotate(-14 63.6 49)"/><path d="M67.8 49.4 V31.6 C68 30 69.6 29.8 70.6 30.8 C72.6 33.2 75 35.4 78.6 36.6 C75.6 38.4 72.4 38 70.4 37 V49.4 Z"/></g>
  </svg></div>
  <div class="card" style="left:157px;top:339px"><svg width="137" height="85" viewBox="0 0 137 85">
    <defs><linearGradient id="gpur" x1="0.15" y1="0.15" x2="0.85" y2="0.9"><stop offset="0" stop-color="#3560fb"/><stop offset="0.5" stop-color="#5a48fa"/><stop offset="1" stop-color="#9a22f7"/></linearGradient></defs>
    <circle cx="68.9" cy="42.9" r="24" fill="url(#gpur)"/>
    <g fill="#fff"><ellipse cx="68.6" cy="50.2" rx="5.8" ry="4.6" transform="rotate(-12 68.6 50.200000000000003)"/><path d="M71.2 50.6 L66 36.6 C67.6 34.6 70.6 32.6 74.2 31.6 C73.4 33.8 73.4 36 74 38 C72.4 37.4 70.6 37.6 69.6 38 L74 49.4 Z"/></g>
  </svg></div>

  <!-- row 5 -->
  <div class="card" style="left:15px;top:434px"><svg width="137" height="85" viewBox="0 0 137 85">
    <circle cx="68" cy="42.9" r="23.5" fill="#f4f4f4" stroke="#d9d9d9" stroke-width=".8"/>
    <path d="M63.2 35.9 L75 42.9 L63.2 49.9 Z" fill="#000" stroke="#000" stroke-width="4" stroke-linejoin="round"/>
  </svg></div>
  <div class="card" style="left:157px;top:434px"><svg width="137" height="85" viewBox="0 0 137 85">
    <rect x="18.3" y="23.3" width="101.4" height="39.2" fill="#fff" stroke="#c9c9c9" stroke-width=".7"/>
    <path d="M62 35 L75.6 43 L62 51 Z" fill="#000"/>
  </svg></div>

  <!-- row 6 -->
  <div class="card" style="left:15px;top:529px"><svg width="137" height="85" viewBox="0 0 137 85">
    <rect x="26.4" y="13.4" width="83.1" height="59" rx="2.5" fill="#fff"/>
    <text x="32.6" y="24.8" font-size="4.6" fill="#8a8a8a">00:27</text><text x="91" y="24.8" font-size="4.6" fill="#8a8a8a">03:20</text>
    <rect x="32.8" y="29.2" width="70.2" height=".8" fill="#e2e2e2"/><rect x="32.8" y="29" width="32" height="1.1" fill="#f4511e"/>
    <circle cx="39.3" cy="44.9" r="6" fill="#fff" stroke="#f7e1db" stroke-width=".8"/><circle cx="96.6" cy="44.9" r="6" fill="#fff" stroke="#f7e1db" stroke-width=".8"/>
    <path d="M41.4 42.9 V46.9 L38 44.9 Z M37.2 42.9 H38 V46.9 H37.2 Z" fill="#f4511e"/><path d="M94.6 42.9 V46.9 L98 44.9 Z M98 42.9 H98.8 V46.9 H98 Z" fill="#f4511e"/>
    <circle cx="68" cy="44.9" r="8.3" fill="#f26a1b"/><path d="M66 41.8 L71.2 44.9 L66 48 Z" fill="#fff" stroke="#fff" stroke-width=".8" stroke-linejoin="round"/>
    <circle cx="35.3" cy="62" r="2.3" fill="none" stroke="#9a9a9a" stroke-width=".6"/><circle cx="100.7" cy="62" r="2.3" fill="none" stroke="#9a9a9a" stroke-width=".6"/>
  </svg></div>
  <div class="card" style="left:157px;top:529px"><svg width="137" height="85" viewBox="0 0 137 85">
    <rect x="27.9" y="13.9" width="81.1" height="58.2" rx="4.5" fill="#fff"/>
    <text x="41.2" y="33" font-size="10.2" fill="#b3b3b3"><tspan fill="#3a3a3a" font-weight="700" font-size="9.7">00:08</tspan>/01:59</text>
    <rect x="36.7" y="43" width="63.6" height="1.7" rx=".8" fill="#dcdcdc"/><rect x="36.7" y="43" width="22.3" height="1.7" rx=".8" fill="#1a1f27"/>
    <g fill="#1a1f27"><path d="M51.8 54.6 V61.2 L46.8 57.9 Z M45.8 54.6 H47 V61.2 H45.8 Z"/><path d="M64.7 54.2 L72 57.9 L64.7 61.6 Z" stroke="#1a1f27" stroke-width=".6" stroke-linejoin="round"/><path d="M85 54.6 V61.2 L90 57.9 Z M90 54.6 H91.2 V61.2 H90 Z"/></g>
  </svg></div>

  <!-- row 7 -->
  <div class="card" style="left:15px;top:624px"><svg width="137" height="85" viewBox="0 0 137 85">
    <rect x="30.2" y="13" width="76.4" height="59.6" fill="#fff"/>
    <circle cx="45.2" cy="32.8" r="6" fill="#efeff5"/><circle cx="91.8" cy="32.8" r="6" fill="#efeff5"/>
    <path d="M45 31.4 V34.2 L42.6 32.8 Z M47.6 31.4 V34.2 L45.2 32.8 Z" fill="#222"/><path d="M92 31.4 V34.2 L94.4 32.8 Z M89.4 31.4 V34.2 L91.8 32.8 Z" fill="#222"/>
    <circle cx="68.5" cy="32.8" r="10" fill="none" stroke="#ecebf8" stroke-width=".7"/><path d="M68.5 22.8 A10 10 0 0 1 78.2 35" fill="none" stroke="#7a66f0" stroke-width=".8"/>
    <circle cx="68.5" cy="32.8" r="6.8" fill="#7a66f0"/><path d="M67 30.4 L71 32.8 L67 35.2 Z" fill="#fff" stroke="#fff" stroke-width=".5" stroke-linejoin="round"/>
    <text x="55" y="52.8" font-size="3.9" fill="#999">00:27 <tspan fill="#333">• 03:20</tspan></text>
    <circle cx="41.3" cy="61.5" r="1.8" fill="none" stroke="#444" stroke-width=".6"/>
    <path d="M75.6 60.8 H76.6 L78 59.6 V63.4 L76.6 62.2 H75.6 Z" fill="#444"/><path d="M79 60.4 A1.6 1.6 0 0 1 79 62.6" fill="none" stroke="#444" stroke-width=".5"/>
    <rect x="82" y="61.2" width="16" height=".5" fill="#e2defa"/><rect x="82" y="61.1" width="10.6" height=".8" fill="#7a66f0"/><circle cx="92.6" cy="61.5" r=".9" fill="#7a66f0"/>
  </svg></div>
  <div class="card" style="left:157px;top:624px"><svg width="137" height="85" viewBox="0 0 137 85">
    <rect x="19.3" y="31.3" width="99.3" height="23.4" fill="#fff"/>
    <circle cx="31.1" cy="43.7" r="8.3" fill="#151515"/><path d="M25 47.5 A7.2 7.2 0 0 1 27 38.4 L31.1 43.7 Z" fill="#3a3a3a"/><circle cx="31.1" cy="43.7" r="2.2" fill="#e5393f"/><circle cx="31.1" cy="43.7" r=".7" fill="#fff"/>
    <path d="M39.4 35.4 V37 L33.4 42.6" fill="none" stroke="#bbb" stroke-width=".5"/>
    <rect x="45" y="38.7" width="48" height="1.2" rx=".6" fill="#e6e6e6"/><rect x="45" y="38.7" width="24" height="1.2" rx=".6" fill="#8f8f8f"/>
    <text x="96" y="40.7" font-size="3.4" fill="#c9c9c9"><tspan fill="#555">00:07</tspan>/03:20</text>
    <g fill="#444"><path d="M45.2 45.4 V48.8 H47.4 A1.2 1.2 0 0 0 47.4 46.4 H46" fill="none" stroke="#555" stroke-width=".5"/><path d="M70 45.6 V49 L67.6 47.3 Z M67 45.6 H67.6 V49 H67 Z"/><path d="M77.4 45.4 L80.4 47.3 L77.4 49.2 Z"/><path d="M87.8 45.6 V49 L90.2 47.3 Z M90.2 45.6 H90.8 V49 H90.2 Z"/><path d="M110.4 46.4 H111.6 L113.4 45 V49.6 L111.6 48.2 H110.4 Z"/></g>
  </svg></div>

  <!-- row 8 -->
  <div class="card" style="left:15px;top:719px"><svg width="137" height="85" viewBox="0 0 137 85">
    <rect x="18.1" y="29.5" width="99.7" height="27" rx="2" fill="#fff"/>
    <text x="23.8" y="37.9" font-size="3.7" fill="#b8c2d8">00:27</text><text x="101" y="37.9" font-size="3.7" fill="#b8c2d8">03:20</text>
    <rect x="38" y="36.2" width="59.4" height=".6" fill="#dfe6f4"/><rect x="38" y="35.9" width="27.2" height="1" rx=".5" fill="#353a4a"/>
    <rect x="24.2" y="45.4" width="3.2" height="3.2" rx=".6" fill="none" stroke="#a9b4d0" stroke-width=".5"/>
    <g fill="#1d222b"><path d="M58 45.4 V48.6 L55.6 47 Z M55 45.4 H55.6 V48.6 H55 Z"/><circle cx="67.7" cy="47" r="4.5"/><path d="M77.4 45.4 V48.6 L79.8 47 Z M79.8 45.4 H80.4 V48.6 H79.8 Z"/></g>
    <path d="M66.7 45.2 L69.7 47 L66.7 48.8 Z" fill="#fff"/>
    <path d="M107.4 46 H108.6 L110.4 44.6 V49.4 L108.6 48 H107.4 Z" fill="none" stroke="#a9b4d0" stroke-width=".5"/><path d="M111.6 45.4 A2.4 2.4 0 0 1 111.6 48.6" fill="none" stroke="#a9b4d0" stroke-width=".5"/>
  </svg></div>
  <div class="card" style="left:157px;top:719px"><svg width="137" height="85" viewBox="0 0 137 85">
    <rect x="19.3" y="29.5" width="99.3" height="26" rx="2" fill="#fff"/>
    <g fill="#1d222b"><path d="M25.6 35.5 V38.5 L23 37 Z M28.2 35.5 V38.5 L25.6 37 Z"/><circle cx="37" cy="37" r="4.3"/><path d="M46.2 35.5 V38.5 L48.8 37 Z M48.8 35.5 V38.5 L51.4 37 Z"/><path d="M110.2 36 H111.4 L113.4 34.4 V39.6 L111.4 38 H110.2 Z"/></g>
    <path d="M36 35.3 L39 37 L36 38.7 Z" fill="#fff"/>
    <circle cx="103" cy="37" r="1.9" fill="none" stroke="#1d222b" stroke-width=".7"/><path d="M114.4 35.6 A2 2 0 0 1 114.4 38.4" fill="none" stroke="#1d222b" stroke-width=".5"/>
    <rect x="23" y="45.1" width="91.6" height=".5" fill="#d9e6fa"/><rect x="23" y="44.8" width="36" height="1" rx=".5" fill="#1f6fee"/>
    <text x="23" y="51.7" font-size="3.6" fill="#b9b9b9">00:27</text><text x="104.4" y="51.7" font-size="3.6" fill="#b9b9b9">03:20</text>
  </svg></div>
</div>

<!-- ================= RIGHT PANEL ================= -->
<div id="rp">
  <div class="t" style="left:48px;top:19px;font-weight:700;color:#0d99ff">样式属性</div>
  <div class="t" style="left:167px;top:19px">触发事件</div>
  <div class="abs" style="left:63px;top:45.5px;width:23px;height:3px;border-radius:1.5px;background:#0d99ff"></div>
  <div class="hr" style="top:49px"></div>

  <div class="box" style="left:15px;top:53px;width:114px;height:34px"></div>
  <div class="t" style="left:24px;top:61px;color:#999">宽度</div><div class="t" style="left:56px;top:61px">310</div>
  <div class="box" style="left:139px;top:53px;width:114px;height:34px"></div>
  <div class="t" style="left:148px;top:61px;color:#999">高度</div><div class="t" style="left:180px;top:61px">169</div>

  <div class="box" style="left:15px;top:97px;width:238px;height:34px"></div>
  <svg class="abs" style="left:112px;top:107px" width="14" height="14" viewBox="0 0 14 14"><g fill="none" stroke="#222" stroke-width="1.8" stroke-linecap="round" stroke-linejoin="round"><path d="M1.2 7.6 V6.2 A2 2 0 0 1 3.2 4.2 H12.8 L8.6 1"/><path d="M12.8 6.4 V7.8 A2 2 0 0 1 10.8 9.8 H1.2 L5.4 13"/></g></svg>
  <div class="t" style="left:131px;top:105px">替换</div>

  <div class="hr" style="top:146px"></div>
  <div class="t h" style="left:15px;top:162px">播放列表</div>
  <div class="inf" style="left:72px;top:165px"></div>

  <div class="rad on" style="left:15px;top:195px"></div><div class="t" style="left:32px;top:192px;color:#0d99ff">单首音频</div>
  <div class="rad" style="left:15px;top:221px"></div><div class="t" style="left:32px;top:218px">多首音频</div>
  <div class="rad" style="left:15px;top:247px"></div><div class="t" style="left:32px;top:244px">显示二维码，手机扫码播放</div>

  <div class="box" style="left:15px;top:270px;width:238px;height:34px"></div>
  <div class="t" style="left:15px;top:278px;width:238px;text-align:center">上传 MP3/MP4</div>

  <div class="box" style="left:15px;top:314px;width:238px;height:36px;background:#f7f7f7;border-color:#e0e0e0"></div>
  <svg class="abs" style="left:26px;top:325px" width="12" height="13" viewBox="0 0 12 13"><path d="M1.8 1.6 H3.2 L10.4 6 A.6 .6 0 0 1 10.4 7 L3.2 11.4 H1.8 A.8 .8 0 0 1 1 10.6 V2.4 A.8 .8 0 0 1 1.8 1.6 Z" fill="#222"/></svg>
  <div class="t" style="left:50px;top:323px">1.mp3</div>
  <svg class="abs" style="left:230px;top:327px" width="11" height="11" viewBox="0 0 11 11"><path d="M.8 .8 L10.2 10.2 M10.2 .8 L.8 10.2" fill="none" stroke="#333" stroke-width="1.2"/></svg>

  <div class="hr" style="top:365px"></div>
  <div class="t h" style="left:15px;top:381px">播放时间</div>
  <div class="rad on" style="left:15px;top:415px"></div><div class="t" style="left:32px;top:412px;color:#0d99ff">单击按钮时播放</div>
  <div class="rad" style="left:15px;top:450px"></div><div class="t" style="left:32px;top:447px">进入页面第</div>
  <div class="box" style="left:97px;top:439px;width:40px;height:34px"></div><div class="t" style="left:109px;top:447px">0</div>
  <div class="t" style="left:136.5px;top:447px">秒开始播放</div>
  <div class="inf" style="left:206px;top:452px"></div>

  <div class="hr" style="top:487px"></div>
  <div class="t h" style="left:15px;top:504px">播放设置</div>
  <div class="chk" style="left:15px;top:538px"><svg width="12" height="12" viewBox="0 0 12 12"><path d="M2.6 6.2 L5 8.6 L9.6 3.6" fill="none" stroke="#fff" stroke-width="1.4" stroke-linecap="round" stroke-linejoin="round"/></svg></div>
  <div class="t" style="left:32px;top:535px">播放时暂停其他音乐</div>
  <div class="chk" style="left:15px;top:569px"><svg width="12" height="12" viewBox="0 0 12 12"><path d="M2.6 6.2 L5 8.6 L9.6 3.6" fill="none" stroke="#fff" stroke-width="1.4" stroke-linecap="round" stroke-linejoin="round"/></svg></div>
  <div class="t" style="left:32px;top:566px">返回此页面时从头播放本歌单</div>
  <div class="inf" style="left:205px;top:570px"></div>

  <div class="hr" style="top:599px"></div>
  <div class="t h" style="left:15px;top:623px">颜色设置</div>
  <div class="box" style="left:205px;top:614px;width:48px;height:34px;border-color:#e6e6e6"></div><div class="t" style="left:205px;top:622px;width:48px;text-align:center">重置</div>

  <div class="t" style="left:15px;top:672px">颜色1</div>
  <div class="box" style="left:203px;top:663px;width:50px;height:34px;border-color:#e6e6e6"></div><div class="abs" style="left:208px;top:668px;width:40px;height:24px;border-radius:4px;background:#0a1a2e"></div>
  <div class="t" style="left:15px;top:716px">颜色2</div>
  <div class="box" style="left:203px;top:707px;width:50px;height:34px;border-color:#e6e6e6"></div><div class="abs" style="left:208px;top:712px;width:40px;height:24px;border-radius:4px;background:#f5f5f5;border:1px solid #e2e2e2"></div>
  <div class="t" style="left:15px;top:760px">颜色3</div>
  <div class="inf" style="left:51px;top:763.5px"></div>
  <div class="box" style="left:203px;top:751px;width:50px;height:34px;border-color:#e6e6e6"></div><div class="abs" style="left:208px;top:756px;width:40px;height:24px;border-radius:4px;background:#4596cc"></div>

  <div class="abs" style="left:260px;top:127px;width:4px;height:567px;border-radius:2px;background:#c9c9c9"></div>
</div>

<!-- ================= ANNOTATION ================= -->
<svg id="anno" class="abs" style="left:0;top:0;z-index:30" width="1918" height="838" viewBox="0 0 1918 838">
  <rect x="1621" y="534" width="269.5" height="113.8" rx="1.5" fill="none" stroke="#f5504f" stroke-width="4"/>
  <path d="M1178 693.3 L1556.8 610 L1554.4 603.8 L1582.2 609 L1558.6 624 L1558.2 618 L1178.2 694.6 Z" fill="#f5504f"/>
</svg>

</body>
</html>
